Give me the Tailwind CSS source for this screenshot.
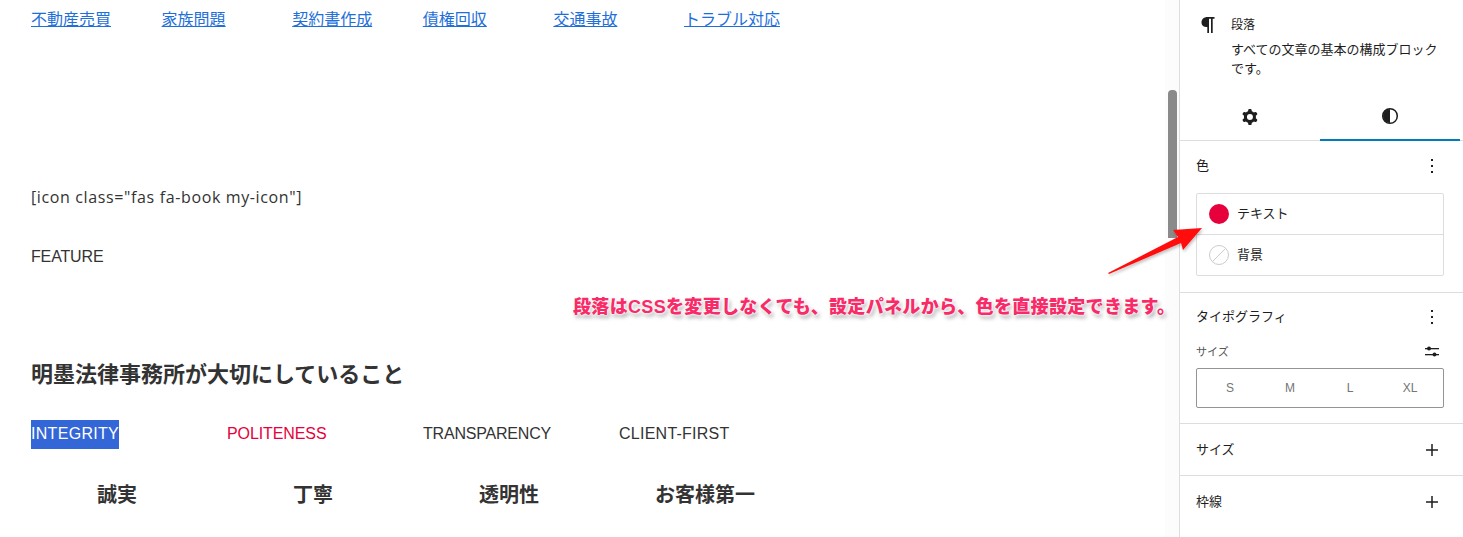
<!DOCTYPE html>
<html lang="ja">
<head>
    <meta charset="UTF-8">
    <title>段落</title>
    <script src="https://cdn.jsdelivr.net/npm/@tailwindcss/browser@4"></script>
</head>
<body class="bg-white overflow-hidden font-['Liberation_Sans','Noto_Sans_CJK_JP',sans-serif] text-[#333]">
    <div class="relative flex h-[537px] w-[1463px] overflow-hidden">
        <main class="w-[1179px] shrink-0 pl-[31px] text-base">
            <div class="grid grid-cols-[106.6px_106.6px_106.6px_106.6px_106.6px_106.6px] gap-x-[24px] pt-[9px] leading-[21px] text-[#1e6fd9]">
                <a href="#" class="underline">不動産売買</a>
                <a href="#" class="underline">家族問題</a>
                <a href="#" class="underline">契約書作成</a>
                <a href="#" class="underline">債権回収</a>
                <a href="#" class="underline">交通事故</a>
                <a href="#" class="underline">トラブル対応</a>
            </div>
            <p class="mt-[157px] leading-[20px] font-['Open_Sans',sans-serif] tracking-[0.63px]">[icon class="fas fa-book my-icon"]</p>
            <p class="mt-[40px] leading-[20px] tracking-[-0.15px]">FEATURE</p>
            <h2 class="mt-[92px] text-[22px] leading-[32px] font-bold">明墨法律事務所が大切にしていること</h2>
            <div class="mt-[29px] grid grid-cols-[172px_172px_172px_172px] gap-x-[24px] leading-[27px]">
                <p><span class="inline-block h-[29px] w-[88px] bg-[#3366d6] tracking-[0.3px] text-white">INTEGRITY</span></p>
                <p class="text-[#e6003c] tracking-[-0.1px]">POLITENESS</p>
                <p class="tracking-[-0.2px]">TRANSPARENCY</p>
                <p class="tracking-[0.25px]">CLIENT-FIRST</p>
            </div>
            <div class="mt-[32px] grid grid-cols-[172px_172px_172px_172px] gap-x-[24px] text-center text-[20px] leading-[28px] font-bold">
                <p>誠実</p>
                <p>丁寧</p>
                <p>透明性</p>
                <p>お客様第一</p>
            </div>
        </main>

        <aside class="w-[284px] shrink-0 border-l border-[#ddd] text-[#1e1e1e] text-[13px]">
            <div class="flex gap-[15px] pl-[20px] pt-[13px] h-[92px]">
                <svg class="shrink-0" width="16" height="24" viewBox="0 0 16 24"><path fill="#1e1e1e" d="M1.500 9.500c0-3.400 2.400-5.500 6-5.500h7v1.700h-1.800V20H11V5.700H9V20H7.300v-6C3.800 14 1.500 12.600 1.500 9.500z"/></svg>
                <div class="w-[216px]">
                    <p class="text-[12px] leading-[18px] mt-[3px]">段落</p>
                    <p class="mt-[6px] text-[13px] leading-[19px]">すべての文章の基本の構成ブロックです。</p>
                </div>
            </div>
            <div class="flex h-[49px] border-b border-[#ddd]">
                <button class="relative flex w-[140px] items-center justify-center pt-[1px]">
                    <svg width="24" height="24" viewBox="0 0 24 24" fill="#1e1e1e"><path fill-rule="evenodd" clip-rule="evenodd" d="M10.289 4.836A1 1 0 0 1 11.275 4h1.306a1 1 0 0 1 .987.836l.244 1.466c.787.26 1.503.679 2.108 1.218l1.393-.522a1 1 0 0 1 1.216.437l.653 1.13a1 1 0 0 1-.23 1.273l-1.148.944a6.025 6.025 0 0 1 0 2.435l1.149.946a1 1 0 0 1 .23 1.272l-.653 1.13a1 1 0 0 1-1.216.437l-1.394-.522c-.605.54-1.32.958-2.108 1.218l-.244 1.466a1 1 0 0 1-.987.836h-1.306a1 1 0 0 1-.986-.836l-.244-1.466a5.995 5.995 0 0 1-2.108-1.218l-1.394.522a1 1 0 0 1-1.217-.436l-.653-1.131a1 1 0 0 1 .23-1.272l1.149-.946a6.026 6.026 0 0 1 0-2.435l-1.148-.944a1 1 0 0 1-.23-1.272l.653-1.131a1 1 0 0 1 1.217-.437l1.393.522a5.994 5.994 0 0 1 2.108-1.218l.244-1.466zM14.929 12a3 3 0 1 1-6 0 3 3 0 0 1 6 0z"/></svg>
                </button>
                <button class="flex w-[140px] items-center justify-center border-b-2 border-[#007cba] -mb-px pt-[1px]">
                    <svg width="18" height="18" viewBox="0 0 18 18"><circle cx="9" cy="9" r="7.300" fill="none" stroke="#1e1e1e" stroke-width="1.500"/><path fill="#1e1e1e" d="M9 2a7 7 0 0 0 0 14z"/></svg>
                </button>
            </div>

            <section class="h-[152px] border-b border-[#ddd] px-[16px]">
                <div class="flex h-[50px] items-center justify-between pr-[6px]">
                    <h3 class="text-[13px]">色</h3>
                    <svg width="18" height="18" viewBox="0 0 18 18" fill="#1e1e1e"><rect x="8" y="2" width="2" height="2"/><rect x="8" y="8" width="2" height="2"/><rect x="8" y="14" width="2" height="2"/></svg>
                </div>
                <div class="mt-[2px] w-[248px] rounded-[2px] border border-[#ddd]">
                    <div class="flex h-[41px] items-center gap-[8px] border-b border-[#ddd] pl-[12px]">
                        <span class="h-[20px] w-[20px] rounded-full bg-[#e6003c]"></span>
                        <span class="text-[13px]">テキスト</span>
                    </div>
                    <div class="flex h-[40px] items-center gap-[8px] pl-[12px]">
                        <svg width="20" height="20" viewBox="0 0 20 20"><circle cx="10" cy="10" r="9.500" fill="none" stroke="#ccc"/><path d="M3.500 16.500l13-13" stroke="#ccc"/></svg>
                        <span class="text-[13px]">背景</span>
                    </div>
                </div>
            </section>

            <section class="h-[131px] border-b border-[#ddd] px-[16px]">
                <div class="flex h-[48px] items-center justify-between pr-[6px]">
                    <h3 class="text-[13px]">タイポグラフィ</h3>
                    <svg width="18" height="18" viewBox="0 0 18 18" fill="#1e1e1e"><rect x="8" y="2" width="2" height="2"/><rect x="8" y="8" width="2" height="2"/><rect x="8" y="14" width="2" height="2"/></svg>
                </div>
                <div class="mt-[1px] flex h-[20px] items-center justify-between pr-[7px]">
                    <span class="text-[11px] text-[#555]">サイズ</span>
                    <svg width="16" height="14" viewBox="0 0 16 14" fill="#1e1e1e"><rect x="1" y="3" width="14" height="1.300"/><rect x="1" y="9" width="14" height="1.300"/><circle cx="5" cy="3.600" r="2"/><circle cx="10.500" cy="9.600" r="2"/></svg>
                </div>
                <div class="mt-[6px] grid h-[40px] w-[248px] grid-cols-4 items-center rounded-[2px] border border-[#949494] px-[3px] text-center text-[12px] text-[#757575]">
                    <span>S</span><span>M</span><span>L</span><span>XL</span>
                </div>
            </section>

            <section class="flex h-[52px] items-center justify-between border-b border-[#ddd] pl-[16px] pr-[22px]">
                <h3 class="text-[13px]">サイズ</h3>
                <svg width="18" height="18" viewBox="0 0 18 18"><path d="M9 3v12M3 9h12" stroke="#1e1e1e" stroke-width="1.500"/></svg>
            </section>
            <section class="flex h-[52px] items-center justify-between pl-[16px] pr-[22px]">
                <h3 class="text-[13px]">枠線</h3>
                <svg width="18" height="18" viewBox="0 0 18 18"><path d="M9 3v12M3 9h12" stroke="#1e1e1e" stroke-width="1.500"/></svg>
            </section>
        </aside>

        <!-- scrollbar -->
        <div class="absolute left-[1165px] top-0 h-full w-[14px] bg-[#fcfcfc]"></div>
        <div class="absolute left-[1168px] top-[90px] h-[148px] w-[9px] rounded-t-[4px] bg-[#8a8a8a]"></div>

        <!-- annotation -->
        <svg class="absolute left-[1100px] top-[220px]" width="112" height="62" viewBox="0 0 112 62">
            <defs><filter id="arrowshadow" x="-20%" y="-20%" width="140%" height="140%"><feDropShadow dx="1" dy="2" stdDeviation="1.500" flood-color="#000" flood-opacity=".25"/></filter></defs>
            <path fill="#ff0f0f" filter="url(#arrowshadow)" d="M8 53L78 17 73 10 102 8 83 30 81 23 9 54z"/>
        </svg>
        <p class="absolute left-[573px] top-[295px] whitespace-nowrap text-[18px] leading-[24px] tracking-[0.33px] font-black text-[#f92a68] [text-shadow:0_0_2px_#fff,0_0_3px_#fff,0_0_4px_#fff,2px_3px_4px_rgba(0,0,0,.4)]">段落はCSSを変更しなくても、設定パネルから、色を直接設定できます。</p>
    </div>
</body>
</html>
